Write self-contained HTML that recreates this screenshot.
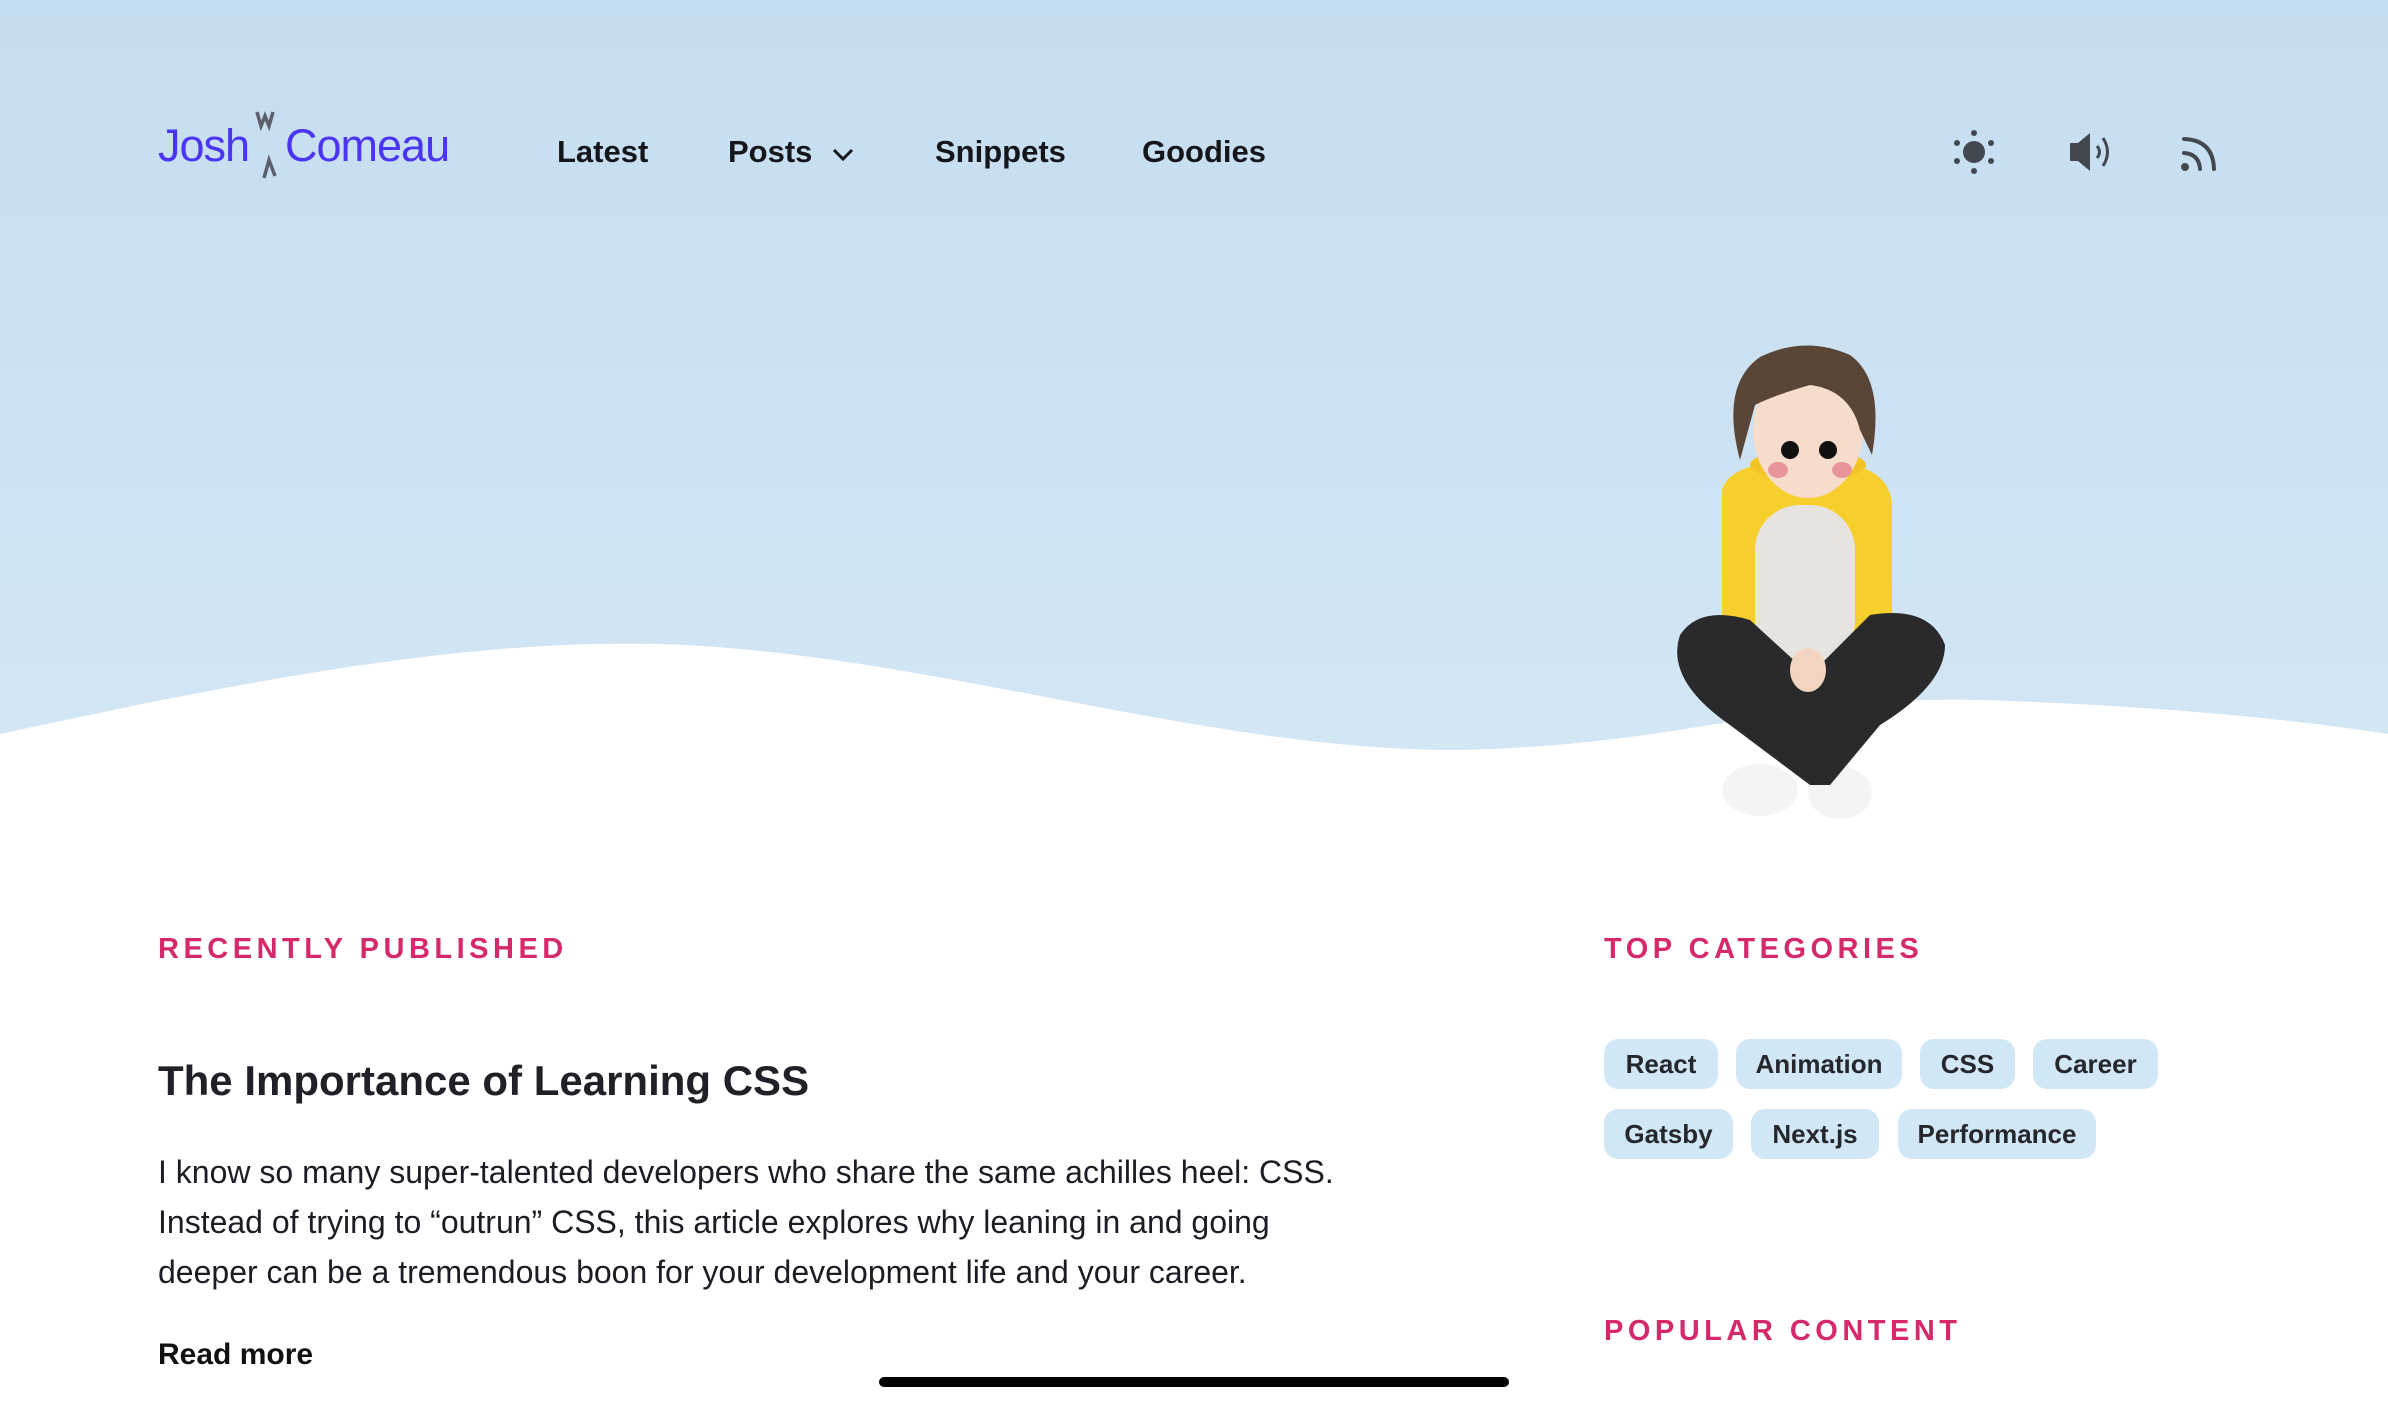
<!DOCTYPE html>
<html><head><meta charset="utf-8"><style>
*{margin:0;padding:0;box-sizing:border-box}
html,body{width:2388px;height:1403px;overflow:hidden;background:#fff;font-family:"Liberation Sans",sans-serif;color:#1c1d24}
.hero{position:absolute;left:0;top:0;width:2388px;height:850px;background:linear-gradient(#c5ddf0,#d4e7f5)}
.abs{position:absolute;white-space:nowrap}
.nav{font-size:31px;font-weight:bold;color:#15161b;top:134px}
.logo{font-size:45px;color:#4b35f2;top:120px;letter-spacing:-1px}
.lab{font-size:29px;font-weight:bold;color:#d6296b;letter-spacing:4.5px}
.tag{position:absolute;height:50px;border-radius:14px;background:#d1e7f5;font-size:26px;font-weight:bold;color:#25272d;display:flex;align-items:center;justify-content:center}
.p{font-size:32px;color:#1c1d24;left:158px}
</style></head><body>
<div class="hero"></div>
<svg class="abs" style="left:0;top:0" width="2388" height="850">
<path d="M0 734 C250 680 500 630 716 647 C980 667 1250 760 1492 749 C1700 740 1800 695 1980 700 C2150 705 2300 720 2388 734 L2388 850 L0 850 Z" fill="#fff"/>
</svg>
<div class="abs logo" style="left:158px">Josh</div>
<div class="abs logo" style="left:285px">Comeau</div>
<svg class="abs" style="left:252px;top:108px" width="34" height="72"><path d="M5 4 L9 18 L13 8 L17 18 L21 4" stroke="#5c5f6b" stroke-width="3.5" fill="none"/><path d="M12 70 L17 52 L23 68" stroke="#5c5f6b" stroke-width="3.5" fill="none"/></svg>
<div class="abs nav" style="left:557px">Latest</div>
<div class="abs nav" style="left:728px">Posts</div>
<svg class="abs" style="left:832px;top:148px" width="22" height="14"><path d="M2 2 L11 11 L20 2" stroke="#15161b" stroke-width="3" fill="none"/></svg>
<div class="abs nav" style="left:935px">Snippets</div>
<div class="abs nav" style="left:1142px">Goodies</div>
<svg class="abs" style="left:1950px;top:126px" width="300" height="52" fill="#434850">
<circle cx="24" cy="26" r="11"/><circle cx="24" cy="7" r="3"/><circle cx="24" cy="45" r="3"/><circle cx="7" cy="17" r="3"/><circle cx="41" cy="17" r="3"/><circle cx="7" cy="35" r="3"/><circle cx="41" cy="35" r="3"/>
<path d="M120 17 L128 17 L140 7 L140 45 L128 35 L120 35 Z"/>
<path d="M147 20 Q152 26 147 32" stroke="#434850" stroke-width="3" fill="none"/><path d="M153 12 Q162 26 153 40" stroke="#434850" stroke-width="3" fill="none"/>
<circle cx="235" cy="41" r="4"/><path d="M234 27 Q249 28 250 43" stroke="#434850" stroke-width="4" fill="none" stroke-linecap="round"/><path d="M234 13 Q263 14 264 43" stroke="#434850" stroke-width="4" fill="none" stroke-linecap="round"/>
</svg>
<svg class="abs" style="left:1660px;top:345px" width="300" height="480">
<ellipse cx="100" cy="445" rx="38" ry="26" fill="#f4f4f2"/><ellipse cx="180" cy="448" rx="32" ry="26" fill="#f4f4f2"/>
<path d="M62 145 Q70 115 150 115 Q230 115 232 160 L232 320 Q150 340 62 320 Z" fill="#f7cf2c"/>
<rect x="95" y="160" width="100" height="160" rx="45" fill="#e6e3e0"/>
<ellipse cx="148" cy="120" rx="58" ry="16" fill="#f2c524"/>
<path d="M20 290 Q40 260 90 275 L150 330 L210 270 Q270 260 285 300 Q285 340 220 380 L170 440 L150 440 L70 380 Q5 335 20 290Z" fill="#2a2a2c"/>
<ellipse cx="148" cy="325" rx="18" ry="22" fill="#f1d5c0"/>
<ellipse cx="148" cy="85" rx="55" ry="68" fill="#f5dccb"/>
<path d="M80 115 Q60 40 100 12 Q145 -10 190 10 Q225 35 212 110 L200 85 Q190 45 150 40 Q115 50 95 60 Z" fill="#5a4638"/>
<circle cx="130" cy="105" r="9" fill="#111"/><circle cx="168" cy="105" r="9" fill="#111"/>
<ellipse cx="118" cy="125" rx="10" ry="8" fill="#e7959a"/><ellipse cx="182" cy="125" rx="10" ry="8" fill="#e7959a"/>
</svg>
<div class="abs lab" style="left:158px;top:933px">RECENTLY PUBLISHED</div>
<div class="abs" style="left:158px;top:1057px;font-size:42px;font-weight:bold;color:#1f2028">The Importance of Learning CSS</div>
<div class="abs p" style="top:1154px">I know so many super-talented developers who share the same achilles heel: CSS.</div>
<div class="abs p" style="top:1204px">Instead of trying to “outrun” CSS, this article explores why leaning in and going</div>
<div class="abs p" style="top:1254px">deeper can be a tremendous boon for your development life and your career.</div>
<div class="abs" style="left:158px;top:1338px;font-size:30px;font-weight:bold;color:#111">Read more</div>
<div class="abs lab" style="left:1604px;top:933px">TOP CATEGORIES</div>
<div class="tag" style="left:1604px;top:1039px;width:114px">React</div>
<div class="tag" style="left:1736px;top:1039px;width:166px">Animation</div>
<div class="tag" style="left:1920px;top:1039px;width:95px">CSS</div>
<div class="tag" style="left:2033px;top:1039px;width:125px">Career</div>
<div class="tag" style="left:1604px;top:1109px;width:129px">Gatsby</div>
<div class="tag" style="left:1751px;top:1109px;width:128px">Next.js</div>
<div class="tag" style="left:1898px;top:1109px;width:198px">Performance</div>
<div class="abs lab" style="left:1604px;top:1315px">POPULAR CONTENT</div>
<div class="abs" style="left:879px;top:1377px;width:630px;height:10px;border-radius:5px;background:#000"></div>
</body></html>
